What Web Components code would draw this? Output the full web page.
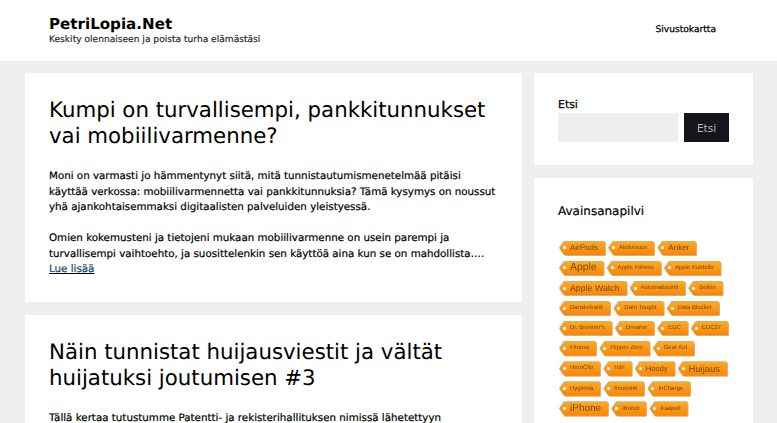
<!DOCTYPE html>
<html lang="fi">
<head>
<meta charset="utf-8">
<title>PetriLopia.Net</title>
<style>
    html, body {
        margin: 0;
        padding: 0;
        height: 423px;
        overflow: hidden;
        background: #edeff1;
        font-family: "DejaVu Sans", sans-serif;
        color: #000;
        text-rendering: geometricPrecision;
    }
    #page {
        display: grid;
        grid-template-columns: 497px 219px;
        gap: 12px;
        padding: 12px 24px 0 25px;
    }
    .column {
        display: flex;
        flex-direction: column;
        gap: 13px;
    }
</style>
</head>
<body>
<site-header></site-header>
<div id="page">
    <div class="column">
        <post-card title="Kumpi on turvallisempi, pankkitunnukset vai mobiilivarmenne?">
            <p>Moni on varmasti jo hämmentynyt siitä, mitä tunnistautumismenetelmää pitäisi käyttää verkossa: mobiilivarmennetta vai pankkitunnuksia? Tämä kysymys on noussut yhä ajankohtaisemmaksi digitaalisten palveluiden yleistyessä.</p>
            <p>Omien kokemusteni ja tietojeni mukaan mobiilivarmenne on usein parempi ja turvallisempi vaihtoehto, ja suosittelenkin sen käyttöä aina kun se on mahdollista.… <a href="#" style="color:#1b5fa8">Lue lisää</a></p>
        </post-card>
        <post-card title="Näin tunnistat huijausviestit ja vältät huijatuksi joutumisen #3">
            <p>Tällä kertaa tutustumme Patentti- ja rekisterihallituksen nimissä lähetettyyn</p>
        </post-card>
    </div>
    <div class="column">
        <search-box></search-box>
        <tag-cloud></tag-cloud>
    </div>
</div>

<script>
class cSiteHeader extends HTMLElement {

    constructor() {
        super();
        this.attachShadow({mode: 'open'});
        this.shadowRoot.innerHTML = `
            <style>
                :host { display: flex; justify-content: space-between; height: 61px; background: #fff; padding: 0 61px 0 49px; box-sizing: border-box; }
                .name { font-size: 15.1px; font-weight: 700; line-height: 18px; margin-top: 15px; }
                .tag { font-size: 9.1px; line-height: 12px; margin-top: 1px; color: #222; -webkit-text-stroke: .15px #222; }
                nav { font-size: 9.1px; line-height: 61px; -webkit-text-stroke: .25px #000; }
            </style>
            <div>
                <div class="name">PetriLopia.Net</div>
                <div class="tag">Keskity olennaiseen ja poista turha elämästäsi</div>
            </div>
            <nav>Sivustokartta</nav>
        `;
    }

}

class cPostCard extends HTMLElement {

    constructor() {
        super();
        const template = document.createElement('template');
        template.innerHTML = `
            <style>
                :host { display: block; background: #fff; padding: 25px 24px 24px; }
                h2 { margin: 0 0 18.6px; font-size: 21.3px; font-weight: 400; line-height: 26.2px; }
                ::slotted(p) { margin: 0 0 15.5px; font-size: 10.3px; line-height: 15.5px; -webkit-text-stroke: .2px #000; }
                ::slotted(p:last-child) { margin-bottom: 0; }
            </style>
            <h2></h2>
            <slot></slot>
        `;
        this.attachShadow({mode: 'open'});
        this.shadowRoot.appendChild(template.content.cloneNode(true));
        this.shadowRoot.querySelector('h2').textContent = this.getAttribute('title');
    }

}

class cSearchBox extends HTMLElement {

    constructor() {
        super();
        this.attachShadow({mode: 'open'});
        this.shadowRoot.innerHTML = `
            <style>
                :host { display: block; background: #fff; padding: 24px; height: 92px; box-sizing: border-box; }
                label { display: block; font-size: 10.9px; line-height: 16px; -webkit-text-stroke: .25px #000; }
                .row { display: flex; gap: 6px; }
                .field { width: 120px; height: 29px; background: #edeff1; }
                button { width: 45px; height: 29px; border: 0; padding: 0; background: #15151d; color: #b9b9be; font: 10.5px "DejaVu Sans", sans-serif; }
            </style>
            <label>Etsi</label>
            <div class="row"><div class="field"></div><button>Etsi</button></div>
        `;
    }

}

class cCloudTag extends HTMLElement {

    constructor() {
        super();
        this.attachShadow({mode: 'open'});
        this.shadowRoot.innerHTML = `
            <style>
                :host { display: inline-block; filter: drop-shadow(1px 1px .5px rgba(110,105,100,.5)); }
                .tag { display: flex; align-items: center; position: relative; height: 14.5px; padding: 0 7px 0 11px; box-sizing: border-box;
                    background: linear-gradient(#ffab28, #f7860a); border-radius: 0 1.5px 1.5px 0;
                    clip-path: polygon(0 50%, 5px 0, 100% 0, 100% 100%, 5px 100%);
                    font-family: "Liberation Sans", Arial, sans-serif; color: #7a4810; white-space: nowrap; line-height: 1; }
                i { position: absolute; left: 4px; top: 50%; width: 3px; height: 3px; margin-top: -1.5px; border-radius: 50%; background: #fff; }
            </style>
            <div class="tag"><i></i><slot></slot></div>
        `;
    }

}

class cTagCloud extends HTMLElement {

    constructor() {
        super();
        const rows = [
            [['AirPods', 8], ['Aktiivisuus', 6], ['Anker', 8]],
            [['Apple', 10.4], ['Apple Fitness', 6], ['Apple Kuntoilu', 6]],
            [['Apple Watch', 8.8], ['Automatisointi', 6], ['Belkin', 6]],
            [['Danskebank', 6], ['Dam Tought', 6], ['Data Blocker', 6]],
            [['Dr. Bronner\'s', 6], ['Dreame', 6], ['EDC', 6], ['EDC27', 6]],
            [['Fitness', 6], ['Flipper Zero', 6], ['Gear Aid', 6]],
            [['HeroClip', 6], ['Hiiri', 6], ['Hoody', 7.6], ['Huijaus', 9.4]],
            [['Hygienia', 6], ['Imurointi', 6], ['InCharge', 6]],
            [['iPhone', 10], ['iRobot', 6], ['Kaapeli', 6]]
        ];
        this.attachShadow({mode: 'open'});
        this.shadowRoot.innerHTML = `
            <style>
                :host { display: block; background: #fff; padding: 24px 24px 0; height: 300px; box-sizing: border-box; }
                h3 { margin: 0 0 16px; padding-top: 2px; font-size: 12px; font-weight: 400; line-height: 15px; -webkit-text-stroke: .2px #000; }
                .row { display: flex; align-items: flex-end; gap: 3px; height: 20.1px; padding-left: 1px; }
                .blank { height: 14px; margin-top: 4px; background: linear-gradient(#ffab28, #f7860a); }
                .last { display: flex; gap: 6px; padding-left: 4px; margin-top: 3.5px; }
            </style>
            <h3>Avainsanapilvi</h3>
            ${rows.map(row => `<div class="row">${row.map(t =>
                `<c-tag style="font-size:${t[1]}px">${t[0]}</c-tag>`).join('')}</div>`).join('')}
            <div class="last">
                <div class="blank" style="width:44px"></div>
                <div class="blank" style="width:24px"></div>
                <div class="blank" style="width:44px"></div>
                <div class="blank" style="width:35px"></div>
            </div>
        `;
    }

}

customElements.define('site-header', cSiteHeader);
customElements.define('post-card', cPostCard);
customElements.define('search-box', cSearchBox);
customElements.define('c-tag', cCloudTag);
customElements.define('tag-cloud', cTagCloud);
</script>
</body>
</html>
